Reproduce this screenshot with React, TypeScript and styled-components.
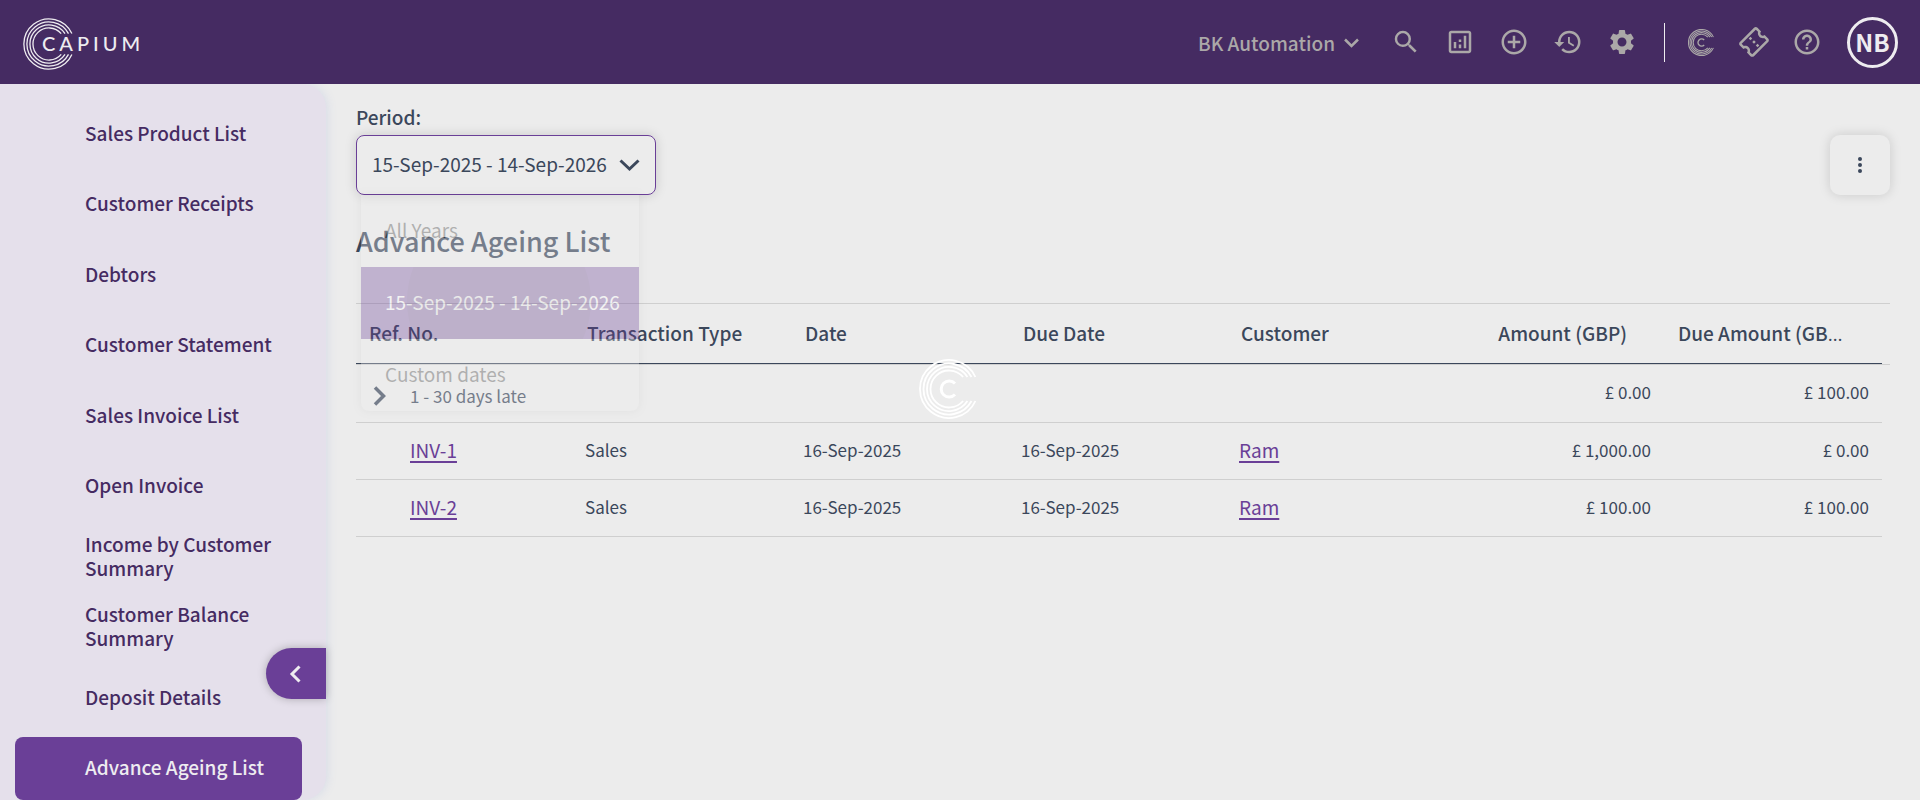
import React from "react";
import styled, { createGlobalStyle, css } from "styled-components";
import {
  MdSearch,
  MdOutlineAnalytics,
  MdControlPoint,
  MdHistory,
  MdSettings,
  MdHelpOutline,
  MdOutlineConfirmationNumber,
} from "react-icons/md";

const c = {
  header: "#452b62",
  page: "#ececec",
  sidebar: "#e5e0eb",
  purple: "#6a3f97",
  ink: "#3b475b",
  line: "#cfcfcf",
  icon: "#aba8a8",
  light: "#eeecf0",
};

const uiFont = `"Noto Sans CJK SC", "Noto Sans", sans-serif`;

const GlobalStyle = createGlobalStyle`
  *, *::before, *::after { box-sizing: border-box; }
  body {
    margin: 0;
    background: ${c.page};
    color: ${c.ink};
    font-family: ${uiFont};
    font-size: 19px;
    line-height: 24px;
  }
  button, select { font: inherit; color: inherit; }
`;

const Page = styled.div`
  display: flex;
  flex-direction: column;
  min-height: 100vh;
`;

const Header = styled.header`
  position: relative;
  z-index: 2;
  display: flex;
  align-items: center;
  justify-content: space-between;
  height: 84px;
  padding: 0 22px 0 23px;
  background: ${c.header};
`;

const Brand = styled.a`
  display: flex;
  align-items: center;
  height: 52px;
  margin-top: 4px;
  color: ${c.light};
  text-decoration: none;
`;

const Wordmark = styled.span`
  margin-left: -33px;
  padding-bottom: 2px;
  font-family: Lato, sans-serif;
  font-size: 20px;
  font-weight: 500;
  letter-spacing: 4px;
`;

const Tools = styled.div`
  display: flex;
  align-items: center;
`;

const Company = styled.button`
  display: flex;
  align-items: center;
  gap: 9px;
  margin-right: 32px;
  padding: 2px 0 0;
  border: 0;
  background: none;
  color: ${c.icon};
  font-weight: 500;
`;

const IconGroup = styled.nav<{ $gap: number }>`
  display: flex;
  align-items: center;
  gap: ${(p) => p.$gap}px;
`;

const IconButton = styled.button<{ $tilt?: boolean }>`
  display: grid;
  place-items: center;
  width: 30px;
  height: 30px;
  padding: 0;
  border: 0;
  background: none;
  color: ${c.icon};
  ${(p) => p.$tilt && css`svg { transform: rotate(-45deg); }`}
`;

const Divider = styled.span`
  width: 1px;
  height: 39px;
  margin: 0 21px 0 27px;
  background: ${c.light};
`;

const Avatar = styled.button`
  width: 51px;
  height: 51px;
  margin-left: 25px;
  padding: 0;
  border: 3px solid ${c.light};
  border-radius: 50%;
  background: none;
  color: ${c.light};
  font-size: 24px;
  font-weight: 700;
`;

const Body = styled.div`
  display: flex;
  flex: 1;
`;

const Sidebar = styled.aside`
  position: relative;
  flex: none;
  display: flex;
  width: 326px;
  padding: 19px 24px 0 15px;
  border-radius: 0 24px 24px 0;
  background: ${c.sidebar};
  box-shadow: 2px 0 10px #d9dde8;
`;

const NavList = styled.ul`
  display: flex;
  flex: 1;
  flex-direction: column;
  justify-content: space-between;
  margin: 0;
  padding: 0;
  list-style: none;
`;

const NavLink = styled.a<{ $active?: boolean }>`
  display: flex;
  align-items: center;
  height: 63px;
  padding: 0 24px 3px 70px;
  border-radius: 8px;
  background: ${(p) => (p.$active ? c.purple : "transparent")};
  color: ${(p) => (p.$active ? c.light : c.header)};
  font-weight: 500;
  text-decoration: none;
`;

const Collapse = styled.button`
  position: absolute;
  right: 0;
  bottom: 101px;
  display: grid;
  place-items: center;
  width: 60px;
  height: 51px;
  padding: 0 2px 0 0;
  border: 0;
  border-radius: 26px 0 0 26px;
  background: ${c.purple};
  color: ${c.light};
  box-shadow: 0 0 8px #00000040;
`;

const Main = styled.main`
  flex: 1;
  min-width: 0;
  padding: 21px 30px 0;
`;

const Toolbar = styled.div`
  display: flex;
  align-items: flex-end;
  justify-content: space-between;
`;

const Field = styled.div`
  position: relative;
  width: 300px;
`;

const Label = styled.label`
  display: block;
  height: 30px;
  font-weight: 500;
`;

const SelectBox = styled.div`
  position: relative;
  display: flex;
  border-radius: 8px;
  box-shadow: 0 0 12px #00000026;
  svg {
    position: absolute;
    right: 16px;
    top: 24px;
    pointer-events: none;
  }
`;

const Select = styled.select`
  appearance: none;
  flex: 1;
  height: 60px;
  padding: 0 40px 2px 15px;
  border: 1px solid ${c.purple};
  border-radius: 8px;
  background: ${c.page};
`;

const Menu = styled.ul`
  position: absolute;
  z-index: 1;
  top: 100%;
  left: 5px;
  width: 278px;
  margin: 0;
  padding: 0;
  border-radius: 0 0 8px 8px;
  background: ${c.page};
  box-shadow: 0 0 8px #00000026;
  color: #363636;
  list-style: none;
  opacity: 0.33;
`;

const MenuItem = styled.li<{ $selected?: boolean }>`
  position: relative;
  display: flex;
  align-items: center;
  height: 72px;
  padding: 0 0 3px 24px;
  overflow: hidden;
  white-space: nowrap;
  ${(p) =>
    p.$selected &&
    css`
      background: ${c.purple};
      color: #ffffff;
      &::after {
        content: "";
        position: absolute;
        left: 46px;
        top: -58px;
        width: 184px;
        height: 184px;
        border-radius: 50%;
        background: #0000001a;
      }
    `}
`;

const MoreButton = styled.button`
  display: grid;
  place-items: center;
  width: 60px;
  height: 60px;
  padding: 0;
  border: 0;
  border-radius: 10px;
  background: ${c.page};
  box-shadow: 0 0 12px #00000026;
`;

const Title = styled.h1`
  margin: 27px 0 43px;
  font-size: 27px;
  line-height: 38px;
  font-weight: 500;
`;

const TableWrap = styled.div`
  position: relative;
  padding-right: 8px;
  border-top: 1px solid ${c.line};
  &::after {
    content: "";
    position: absolute;
    top: 60px;
    left: 0;
    right: 0;
    height: 1px;
    background: ${c.line};
  }
`;

const Table = styled.table`
  width: 100%;
  table-layout: fixed;
  border-collapse: separate;
  border-spacing: 0;
`;

/* Open Sans supplies a baseline ellipsis for a heading that is cut off. */
const Th = styled.th<{ $right?: boolean }>`
  height: 60px;
  padding: ${(p) => (p.$right ? "0 37px 0 14px" : "0 13px")};
  border-bottom: 1px solid ${c.ink};
  overflow: hidden;
  font-family: "Open Sans", sans-serif;
  font-weight: 400;
  text-align: ${(p) => (p.$right ? "right" : "left")};
  text-overflow: ellipsis;
  white-space: nowrap;
`;

const ThText = styled.span`
  font-family: ${uiFont};
  font-weight: 500;
`;

const Td = styled.td<{ $right?: boolean; $indent?: boolean }>`
  height: 57px;
  padding: 0 13px 2px ${(p) => (p.$indent ? 54 : 11)}px;
  border-bottom: 1px solid ${c.line};
  font-size: 17px;
  text-align: ${(p) => (p.$right ? "right" : "left")};
`;

const GroupRow = styled.tr`
  td { height: 59px; }
`;

const Group = styled.button`
  display: flex;
  align-items: center;
  gap: 24px;
  padding: 8px 6px 0;
  border: 0;
  background: none;
`;

const RecordLink = styled.a`
  color: ${c.purple};
  font-size: 19px;
  text-decoration: underline;
  text-decoration-thickness: 2px;
  text-underline-offset: 3px;
`;

const Loader = styled.div`
  position: fixed;
  left: calc(50% - 41px);
  top: calc(50% - 41px);
  width: 60px;
  height: 60px;
  color: #ffffff;
  pointer-events: none;
`;

/* Concentric open rings of the brand mark, with an optional small C inside. */
function Rings({ size, inner, weight }: { size: number; inner?: boolean; weight: number }) {
  const rings = [29, 25.5, 22, 18.5];
  const gap = 12;
  return (
    <svg width={size} height={size} viewBox="0 0 60 60" fill="none" stroke="currentColor" strokeWidth={weight} aria-hidden="true">
      {rings.map((r) => {
        const x = 30 + Math.sqrt(r * r - gap * gap);
        return <path key={r} d={`M${x} ${30 - gap}A${r} ${r} 0 1 0 ${x} ${30 + gap}`} />;
      })}
      {inner && <path d="M36 24.500A8 8 0 1 0 36 35.500" strokeWidth={3} />}
    </svg>
  );
}

function Chevron({ d, w, h, weight }: { d: string; w: number; h: number; weight: number }) {
  return (
    <svg width={w} height={h} viewBox={`0 0 ${w} ${h}`} fill="none" stroke="currentColor" strokeWidth={weight} aria-hidden="true">
      <path d={d} />
    </svg>
  );
}

const navItems = [
  "Sales Product List",
  "Customer Receipts",
  "Debtors",
  "Customer Statement",
  "Sales Invoice List",
  "Open Invoice",
  "Income by Customer Summary",
  "Customer Balance Summary",
  "Deposit Details",
  "Advance Ageing List",
];

const periods = ["All Years", "15-Sep-2025 - 14-Sep-2026", "Custom dates"];
const current = periods[1];

const columns = [
  { name: "Ref. No." },
  { name: "Transaction Type" },
  { name: "Date" },
  { name: "Due Date" },
  { name: "Customer" },
  { name: "Amount (GBP)", right: true },
  { name: "Due Amount (GBP)", right: true },
];

const rows = [
  { ref: "INV-1", type: "Sales", date: "16-Sep-2025", due: "16-Sep-2025", customer: "Ram", amount: "£ 1,000.00", dueAmount: "£ 0.00" },
  { ref: "INV-2", type: "Sales", date: "16-Sep-2025", due: "16-Sep-2025", customer: "Ram", amount: "£ 100.00", dueAmount: "£ 100.00" },
];

export default function App() {
  return (
    <Page>
      <GlobalStyle />
      <Header>
        <Brand href="#">
          <Rings size={52} weight={1.5} />
          <Wordmark>CAPIUM</Wordmark>
        </Brand>
        <Tools>
          <Company type="button">
            BK Automation
            <Chevron d="M1 1.500L7.500 8L14 1.500" w={15} h={10} weight={2.5} />
          </Company>
          <IconGroup $gap={24} aria-label="Tools">
            <IconButton aria-label="Search"><MdSearch size={30} /></IconButton>
            <IconButton aria-label="Reports"><MdOutlineAnalytics size={30} /></IconButton>
            <IconButton aria-label="Add"><MdControlPoint size={30} /></IconButton>
            <IconButton aria-label="History"><MdHistory size={30} /></IconButton>
            <IconButton aria-label="Settings"><MdSettings size={30} /></IconButton>
          </IconGroup>
          <Divider />
          <IconGroup $gap={23} aria-label="Support">
            <IconButton aria-label="Capium apps"><Rings size={27} inner weight={2.4} /></IconButton>
            <IconButton aria-label="Tickets" $tilt><MdOutlineConfirmationNumber size={30} /></IconButton>
            <IconButton aria-label="Help"><MdHelpOutline size={30} /></IconButton>
          </IconGroup>
          <Avatar type="button">NB</Avatar>
        </Tools>
      </Header>
      <Body>
        <Sidebar>
          <NavList>
            {navItems.map((name) => (
              <li key={name}>
                <NavLink href="#" $active={name === "Advance Ageing List"}>{name}</NavLink>
              </li>
            ))}
          </NavList>
          <Collapse type="button" aria-label="Collapse menu">
            <Chevron d="M10.500 1.500L3 9L10.500 16.500" w={12} h={18} weight={3} />
          </Collapse>
        </Sidebar>
        <Main>
          <Toolbar>
            <Field>
              <Label htmlFor="period">Period:</Label>
              <SelectBox>
                <Select id="period" defaultValue={current}>
                  {periods.map((p) => <option key={p}>{p}</option>)}
                </Select>
                <Chevron d="M1.500 1.500L10.500 10L19.500 1.500" w={21} h={13} weight={3} />
              </SelectBox>
              <Menu>
                {periods.map((p) => <MenuItem key={p} $selected={p === current}>{p}</MenuItem>)}
              </Menu>
            </Field>
            <MoreButton type="button" aria-label="More actions">
              <svg width="4" height="16" viewBox="0 0 4 16" fill="currentColor" aria-hidden="true">
                <circle cx="2" cy="2" r="2" />
                <circle cx="2" cy="8" r="2" />
                <circle cx="2" cy="14" r="2" />
              </svg>
            </MoreButton>
          </Toolbar>
          <Title>Advance Ageing List</Title>
          <TableWrap>
            <Table>
              <thead>
                <tr>
                  {columns.map((col) => (
                    <Th key={col.name} $right={col.right}><ThText>{col.name}</ThText></Th>
                  ))}
                </tr>
              </thead>
              <tbody>
                <GroupRow>
                  <Td colSpan={5}>
                    <Group type="button">
                      <Chevron d="M2 1.500L10.500 10L2 18.500" w={13} h={20} weight={3.5} />
                      1 - 30 days late
                    </Group>
                  </Td>
                  <Td $right>£ 0.00</Td>
                  <Td $right>£ 100.00</Td>
                </GroupRow>
                {rows.map((r) => (
                  <tr key={r.ref}>
                    <Td $indent><RecordLink href="#">{r.ref}</RecordLink></Td>
                    <Td>{r.type}</Td>
                    <Td>{r.date}</Td>
                    <Td>{r.due}</Td>
                    <Td><RecordLink href="#">{r.customer}</RecordLink></Td>
                    <Td $right>{r.amount}</Td>
                    <Td $right>{r.dueAmount}</Td>
                  </tr>
                ))}
              </tbody>
            </Table>
          </TableWrap>
        </Main>
      </Body>
      <Loader role="status" aria-label="Loading">
        <Rings size={60} inner weight={1.8} />
      </Loader>
    </Page>
  );
}
